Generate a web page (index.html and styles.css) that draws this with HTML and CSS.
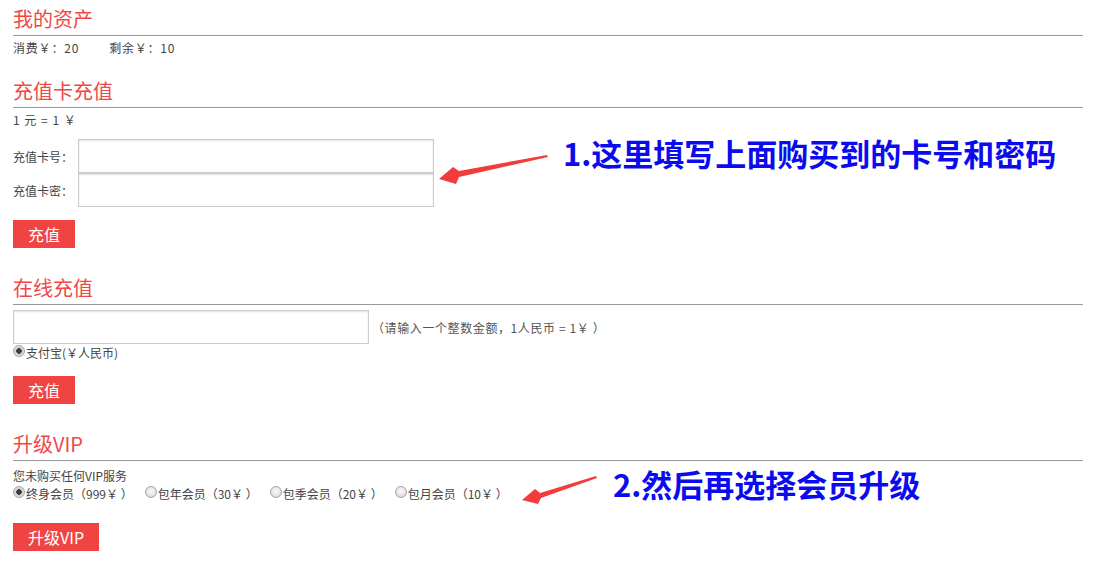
FILE: index.html
```html
<!DOCTYPE html>
<html lang="zh-CN">
<head>
    <meta charset="UTF-8">
    <title>我的资产</title>
    <link rel="stylesheet" href="styles.css">
</head>
<body>
    <div class="page">
        <h2 class="section-title first">我的资产</h2>
        <p class="info assets"><span class="spent">消费￥：20</span><span>剩余￥：10</span></p>

        <h2 class="section-title after-info">充值卡充值</h2>
        <p class="info rate">1 元 = 1 ￥</p>
        <div class="card-form">
            <div class="field">
                <label class="field-label">充值卡号：</label>
                <input class="text-input card-input" type="text">
            </div>
            <div class="field">
                <label class="field-label">充值卡密：</label>
                <input class="text-input card-input" type="text">
            </div>
        </div>
        <button class="btn btn-card">充值</button>

        <h2 class="section-title">在线充值</h2>
        <div class="online-row">
            <input class="text-input amount-input" type="text">
            <span class="hint">（请输入一个整数金额，1人民币 = 1￥ ）</span>
        </div>
        <div class="radio-row">
            <label class="radio-item"><input type="radio" name="pay" checked>支付宝(￥人民币)</label>
        </div>
        <button class="btn">充值</button>

        <h2 class="section-title">升级VIP</h2>
        <p class="info vip-status">您未购买任何VIP服务</p>
        <div class="radio-row">
            <label class="radio-item"><input type="radio" name="vip" checked>终身会员（999￥ ）</label>
            <label class="radio-item"><input type="radio" name="vip">包年会员（30￥ ）</label>
            <label class="radio-item"><input type="radio" name="vip">包季会员（20￥ ）</label>
            <label class="radio-item"><input type="radio" name="vip">包月会员（10￥ ）</label>
        </div>
        <button class="btn btn-vip">升级VIP</button>
    </div>

    <!-- annotations drawn over the screenshot -->
    <svg class="arrows" width="1098" height="563" viewBox="0 0 1098 563">
        <polygon points="547,155 459,171 453,167 439,179 456,184 459,177 548,157" fill="#f23c3c"/>
        <polygon points="596,476 540,493 535,489 522,500 538,504 541,498 597,478" fill="#f23c3c"/>
    </svg>
    <div class="note note-card">1.这里填写上面购买到的卡号和密码</div>
    <div class="note note-vip">2.然后再选择会员升级</div>
</body>
</html>
```

FILE: styles.css
```css
body {
    margin: 0;
    font-family: "Noto Sans CJK SC", "Liberation Sans", sans-serif;
    font-size: 12px;
    color: #444;
    background: #fff;
    text-spacing-trim: space-all;
}
.page {
    padding: 0 15px 0 13px;
}
.section-title {
    margin: 28px 0 0;
    font-size: 20px;
    font-weight: normal;
    line-height: 24px;
    padding-bottom: 4px;
    color: #f04747;
    border-bottom: 1px solid #999;
}
.section-title.first {
    margin-top: 7px;
}
.section-title.after-info {
    margin-top: 22px;
}
.info {
    margin: 0;
    line-height: 18px;
}
.assets {
    margin-top: 3px;
    letter-spacing: 0.8px;
}
.spent {
    margin-right: 30px;
}
.rate {
    margin: 3px 0 10px;
    word-spacing: 2px;
}
.field {
    display: flex;
    align-items: center;
}
.field-label {
    width: 65px;
}
.text-input {
    box-sizing: border-box;
    height: 34px;
    border: 1px solid #ccc;
    box-shadow: inset 0 1px 2px rgba(0, 0, 0, 0.12);
    margin: 0;
    padding: 0 6px;
    font-family: inherit;
}
.card-input {
    width: 356px;
}
.btn {
    display: block;
    height: 28px;
    padding: 0 15px;
    border: none;
    background: #f04444;
    color: #fff;
    font-family: inherit;
    font-size: 16px;
    line-height: 28px;
    margin: 14px 0 0;
}
.btn-card {
    margin-top: 13px;
}
.btn-vip {
    margin-top: 20px;
}
.online-row {
    display: flex;
    align-items: center;
    margin-top: 5px;
}
.amount-input {
    width: 356px;
}
.hint {
    margin-left: 3px;
    color: #555;
    letter-spacing: 0.6px;
}
.radio-row {
    display: flex;
    line-height: 18px;
}
.radio-item {
    display: flex;
    align-items: center;
    margin-right: 12px;
}
.radio-item input {
    appearance: none;
    -webkit-appearance: none;
    width: 12px;
    height: 12px;
    margin: -4px 1px 0 0;
    border: 1px solid #a4a4a4;
    border-radius: 50%;
    box-sizing: border-box;
    background: radial-gradient(circle at 50% 40%, #fafafa, #d4d4d4);
}
.radio-item input:checked {
    background: radial-gradient(circle, #3a3a3a 0 2.5px, #cfcfcf 3px, #e4e4e4 6px);
}
.vip-status {
    margin-top: 6px;
}
.arrows {
    position: absolute;
    left: 0;
    top: 0;
    pointer-events: none;
}
.note {
    position: absolute;
    font-size: 31px;
    font-weight: bold;
    line-height: 31px;
    color: #0b0bf0;
    white-space: nowrap;
}
.note-card {
    left: 563px;
    top: 137px;
}
.note-vip {
    left: 613px;
    top: 468px;
}
```
